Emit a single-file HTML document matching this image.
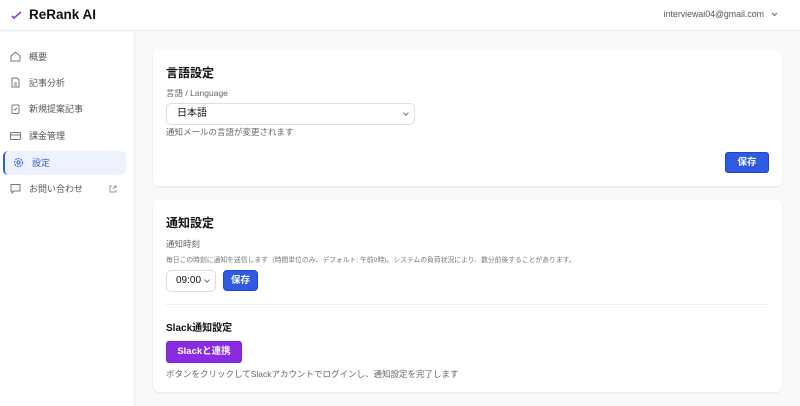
<!DOCTYPE html>
<html><head><meta charset="utf-8"><style>
*{box-sizing:border-box;margin:0;padding:0}
body{width:800px;height:406px;overflow:hidden;background:#f8f9fb;font-family:"Liberation Sans","Noto Sans CJK JP",sans-serif;color:#111;position:relative}
.hdr{position:absolute;left:0;top:0;width:800px;height:31px;background:#fff;border-bottom:1px solid #e8e9ec}
.logo{position:absolute;left:29px;top:7px;font-size:13.5px;font-weight:bold;color:#111}
.email{position:absolute;right:36px;top:9px;font-size:8.8px;color:#555}
.side{position:absolute;left:0;top:32px;width:135px;height:374px;background:#fff;border-right:1px solid #eceef1}
.it{position:absolute;left:10px;font-size:9px;color:#555;height:14px;line-height:14px}
.it svg{position:absolute;left:0;top:1px}
.it span{position:absolute;left:19px;white-space:nowrap}
.act{position:absolute;left:3px;top:119px;width:123px;height:24px;background:#eef2fd;border-radius:5px;border-left:2px solid #2f5be0}
.card{position:absolute;left:153px;width:629px;background:#fff;border-radius:6px;box-shadow:0 1px 2px rgba(0,0,0,.08)}
.t{position:absolute;left:13px;font-size:12px;font-weight:bold}
.l{position:absolute;left:13px;font-size:8.5px;color:#666;white-space:nowrap}
.sel{position:absolute;border:1px solid #d9dce1;border-radius:5px;background:#fff;font-size:10px;padding-left:10px;line-height:20px}
.sel:after{content:"";position:absolute;right:6px;top:7px;width:3px;height:3px;border-right:1px solid #777;border-bottom:1px solid #777;transform:rotate(45deg)}
.btn{position:absolute;background:#2f5be0;color:#fff;font-size:9.5px;font-weight:bold;text-align:center;border-radius:3px;border:1px solid #1f46c4}
</style></head><body>
<div class="hdr">
<svg style="position:absolute;left:11px;top:11px" width="11" height="9" viewBox="0 0 11 9"><path d="M1 5 L3 7 L10 1" stroke="#8a3fd0" stroke-width="1.6" fill="none"/></svg>
<div class="logo">ReRank AI</div>
<div class="email">interviewai04@gmail.com</div>
<svg style="position:absolute;left:771px;top:12px" width="7" height="5"><path d="M1 1L3.5 3.5L6 1" stroke="#666" fill="none"/></svg>
</div>
<div class="side">
<div class="act"></div>
</div>
<div class="it" style="top:50px"><svg width="11" height="11" viewBox="0 0 11 11"><path d="M1 5L5.5 1L10 5V10H1Z" stroke="#777" fill="none"/></svg><span>概要</span></div>
<div class="it" style="top:76px"><svg width="11" height="11" viewBox="0 0 11 11"><path d="M2 1H7L9 3V10H2Z M4 6H7 M4 8H7" stroke="#777" fill="none"/></svg><span>記事分析</span></div>
<div class="it" style="top:102px"><svg width="11" height="11" viewBox="0 0 11 11"><rect x="2" y="2" width="7" height="8.5" rx="1" stroke="#777" fill="none"/><path d="M4 6L5 7L7 5" stroke="#777" fill="none"/></svg><span>新規提案記事</span></div>
<div class="it" style="top:129px"><svg width="11" height="11" viewBox="0 0 11 11"><rect x="0.5" y="2.5" width="10" height="7" rx="1" stroke="#777" fill="none"/><path d="M1 5H10" stroke="#777"/></svg><span>課金管理</span></div>
<div class="it" style="top:156px;left:13px;color:#2f5be0"><svg width="11" height="11" viewBox="0 0 11 11"><circle cx="5.5" cy="5.5" r="4" stroke="#2f5be0" fill="none" stroke-dasharray="2 1"/><circle cx="5.5" cy="5.5" r="1.6" stroke="#2f5be0" fill="none"/></svg><span>設定</span></div>
<div class="it" style="top:182px"><svg width="11" height="11" viewBox="0 0 11 11"><path d="M1 1.5H10V8H4L2 10V8H1Z" stroke="#777" fill="none"/></svg><span>お問い合わせ</span></div>
<svg style="position:absolute;left:109px;top:185px" width="8" height="8"><path d="M3 1H1V7H7V5 M4 4L7 1 M5 1H7V3" stroke="#999" fill="none"/></svg>

<div class="card" style="top:50px;height:136px">
<div class="t" style="top:14px">言語設定</div>
<div class="l" style="top:37px">言語 / Language</div>
<div class="sel" style="left:13px;top:53px;width:249px;height:22px">日本語</div>
<div class="l" style="top:76px">通知メールの言語が変更されます</div>
<div class="btn" style="left:572px;top:102px;width:44px;height:21px;line-height:19px">保存</div>
</div>

<div class="card" style="top:200px;height:192px">
<div class="t" style="top:14px">通知設定</div>
<div class="l" style="top:38px">通知時刻</div>
<div class="l" style="top:54px;font-size:6.8px;color:#777">毎日この時刻に通知を送信します（時間単位のみ、デフォルト: 午前9時)。システムの負荷状況により、数分前後することがあります。</div>
<div class="sel" style="left:13px;top:70px;width:50px;height:22px;padding-left:9px">09:00</div>
<div class="btn" style="left:70px;top:70px;width:35px;height:21px;line-height:19px;border-radius:4px">保存</div>
<div style="position:absolute;left:13px;top:104px;width:602px;height:1px;background:#eceef1"></div>
<div class="t" style="top:119px;font-size:10px">Slack通知設定</div>
<div class="btn" style="left:13px;top:141px;width:76px;height:22px;line-height:20px;background:#8a2be2;border-color:#7a22d0">Slackと連携</div>
<div class="l" style="top:168px">ボタンをクリックしてSlackアカウントでログインし、通知設定を完了します</div>
</div>
</body></html>
